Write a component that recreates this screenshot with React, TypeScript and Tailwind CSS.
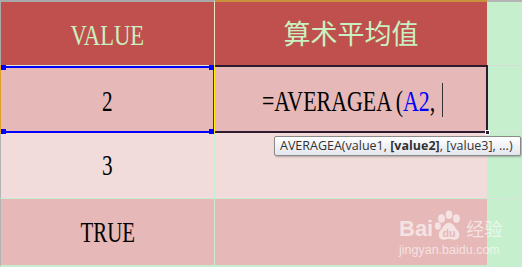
import React from 'react';

const serif = { fontFamily: '"Liberation Serif", "Noto Sans CJK SC", serif' };

// Latin text in the sheet is narrow like SimSun's half-width glyphs
const Narrow: React.FC<{ children: React.ReactNode; className?: string }> = ({ children, className = 'origin-center scale-x-[0.73]' }) => (
  <span className={`inline-block whitespace-nowrap ${className}`}>{children}</span>
);

const Handle: React.FC<{ className: string }> = ({ className }) => (
  <div className={`absolute w-[5px] h-[5px] bg-[#0000ff] ${className}`} />
);

const Paw = () => (
  <svg width="32" height="32" viewBox="0 0 30 30" className="block">
    <g fill="white">
      <ellipse cx="8" cy="8" rx="3.2" ry="4" />
      <ellipse cx="15" cy="4.5" rx="3.2" ry="4" />
      <ellipse cx="22" cy="8" rx="3.2" ry="4" />
      <ellipse cx="4.5" cy="15" rx="2.8" ry="3.5" />
      <path d="M15 12c-4 0-5 4-8 7-3 3-2 9 3 9 2 0 3-1 5-1s3 1 5 1c5 0 6-6 3-9-3-3-4-7-8-7z" />
    </g>
    <text x="15" y="25" textAnchor="middle" fontSize="10" fontWeight="bold" fill="#e6b8b7" fontFamily="Liberation Sans, sans-serif">du</text>
  </svg>
);

export default function App() {
  return (
    <div className="relative w-[522px] h-[267px] overflow-hidden bg-[#c6efce]" style={serif}>
      <div className="grid grid-cols-[215px_272px_35px] grid-rows-[66px_67px_66px_68px] h-full">
        {/* header row */}
        <div className="flex items-center justify-center bg-[#c0504d] border-t-2 border-l border-[#a9a9a9] border-r border-r-[#efe6c8] border-b border-b-[#dfe9d8] text-[29px] text-[#c9f0c2] pt-[5px]">
          <Narrow className="origin-center scale-x-[0.78]">VALUE</Narrow>
        </div>
        <div className="flex items-center justify-center bg-[#c0504d] border-t-2 border-[#c8923a] border-b border-b-[#dfe9d8] text-[27px] text-[#c9f0c2] pt-[4px]">
          算术平均值
        </div>
        <div className="border-t-2 border-[#b4b4b4] border-b border-b-[#d6dcd6]" />

        {/* row 2 */}
        <div className="flex items-center justify-center bg-[#e6b8b7] text-[29px] text-black pt-[5px]">
          <Narrow>2</Narrow>
        </div>
        <div className="flex items-center bg-[#e6b8b7] text-[29px] text-black pl-[47px] pt-[5px]">
          <Narrow className="origin-left scale-x-[0.755]">
            =AVERAGEA<span className="ml-[5px]">(</span><span className="text-[#0000ff]">A2</span>,
          </Narrow>
        </div>
        <div className="border-b border-[#d6e4d6]" />

        {/* row 3 */}
        <div className="flex items-center justify-center bg-[#f2dcdb] border-r border-[#c8ecd0] border-b border-b-[#c8ecd0] border-l border-l-[#b4b4b4] text-[29px] text-black pt-[1px]">
          <Narrow>3</Narrow>
        </div>
        <div className="bg-[#f2dcdb] border-b border-[#c8ecd0]" />
        <div className="border-b border-[#d6e4d6]" />

        {/* row 4 */}
        <div className="flex items-center justify-center bg-[#e6b8b7] border-r border-[#c8ecd0] border-b-2 border-b-[#c8ecd0] border-l border-l-[#b4b4b4] text-[29px] text-black pt-[1px]">
          <Narrow className="origin-center scale-x-[0.72]">TRUE</Narrow>
        </div>
        <div className="bg-[#e6b8b7] border-b-2 border-[#c8ecd0]" />
        <div />
      </div>

      {/* A2 reference highlight */}
      <div className="absolute left-0 top-[65px] w-[215px] h-[69px] pointer-events-none">
        <div className="absolute left-[1px] right-[2px] top-[1px] h-[2px] bg-[#0000ff]" />
        <div className="absolute left-[1px] right-[2px] bottom-[1px] h-[2px] bg-[#0000ff]" />
        <div className="absolute left-0 top-0 bottom-0 w-[1px] bg-[#e0a020]" />
        <div className="absolute right-[1px] top-0 bottom-0 w-[1px] bg-[#1d4a40]" />
        <div className="absolute right-0 top-0 bottom-0 w-[1px] bg-[#ffee00]" />
        <Handle className="left-[1px] top-0" />
        <Handle className="right-[1px] top-0" />
        <Handle className="left-[1px] bottom-0" />
        <Handle className="right-[1px] bottom-0" />
      </div>

      {/* B2 edit border + caret */}
      <div className="absolute left-[215px] top-[65px] w-[273px] h-[68px] border-t-2 border-r-2 border-b-2 border-[#2d1b2e] pointer-events-none" />
      <div className="absolute left-[485px] top-[130px] w-[5px] h-[5px] bg-[#2d1b2e] border border-white" />
      <div className="absolute left-[442px] top-[83px] w-[1px] h-[34px] bg-[#333]" />

      {/* function tooltip */}
      <div
        className="absolute left-[274px] top-[136px] h-[20px] pl-[5px] pr-[7px] flex items-center rounded-[2px] border border-[#8a8a8a] bg-gradient-to-b from-white to-[#e4e6ee] shadow-[1px_1px_2px_rgba(0,0,0,0.25)] text-[12.5px] text-[#333] whitespace-nowrap"
        style={{ fontFamily: '"Open Sans", "Liberation Sans", sans-serif' }}
      >
        AVERAGEA(value1,&nbsp;<span className="font-bold">[value2]</span>, [value3], ...)
      </div>

      {/* watermark */}
      <div
        className="absolute left-[399px] top-[210px] flex flex-col text-white pointer-events-none opacity-60"
        style={{ fontFamily: '"Liberation Sans", "Noto Sans CJK SC", sans-serif' }}
      >
        <div className="flex items-end">
          <span className="text-[22px] font-bold leading-none mb-[2px]">Bai</span>
          <Paw />
          <span className="text-[18px] leading-none mb-[3px] ml-[1px]">经验</span>
        </div>
        <span className="text-[12.5px] leading-none mt-[2px]">jingyan.baidu.com</span>
      </div>
    </div>
  );
}
